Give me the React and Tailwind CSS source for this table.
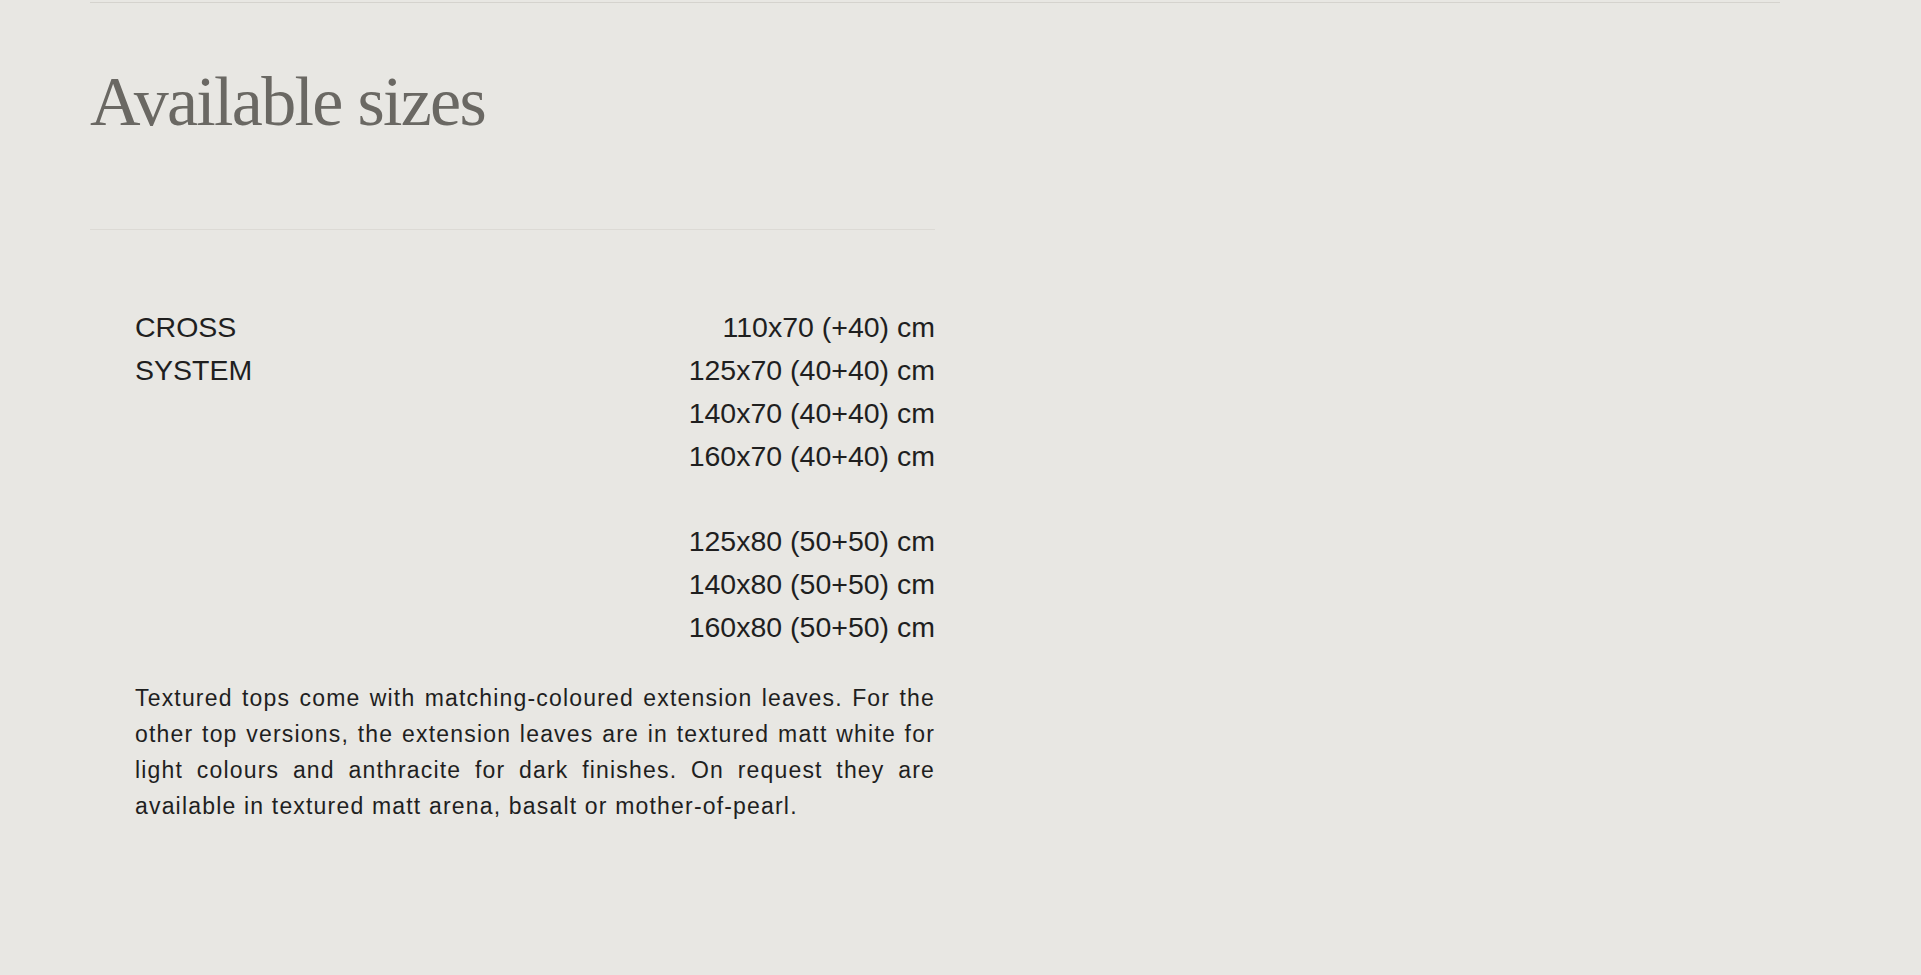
import React from 'react';

const sizes = [
  '110x70 (+40) cm',
  '125x70 (40+40) cm',
  '140x70 (40+40) cm',
  '160x70 (40+40) cm',
  null,
  '125x80 (50+50) cm',
  '140x80 (50+50) cm',
  '160x80 (50+50) cm',
];

const App = () => {
  return (
    <div className="min-h-screen bg-[#e8e7e3] pt-[2px] pl-[90px]">
      <div className="w-[1690px] border-t border-[#d5d3ce]" />

      {/* Heading */}
      <h1 className="mt-[64px] text-[70px] leading-none tracking-[-1.7px] text-[#6a6863] font-['Liberation_Serif',serif]">
        Available sizes
      </h1>

      <div className="w-[845px]">
        <div className="mt-[92px] border-t border-[#dcdad5]" />

        <div className="pl-[45px] font-['Liberation_Sans',Arial,sans-serif] text-[#1f1f1f]">
          {/* Sizes table */}
          <div className="mt-[76px] grid grid-cols-[1fr_auto] text-[28.5px] leading-[42.86px]">
            <div>
              <div>CROSS</div>
              <div>SYSTEM</div>
            </div>
            <div className="text-right">
              {sizes.map((s, i) => (
                <div key={i} className="h-[42.86px]">
                  {s}
                </div>
              ))}
            </div>
          </div>

          {/* Note */}
          <p className="mt-[31px] text-[23px] leading-[36.2px] tracking-[1.18px] text-justify">
            Textured tops come with matching-coloured extension leaves. For the other top versions, the
            extension leaves are in textured matt white for light colours and anthracite for dark
            finishes. On request they are available in textured matt arena, basalt or mother-of-pearl.
          </p>
        </div>
      </div>
    </div>
  );
};

export default App;
